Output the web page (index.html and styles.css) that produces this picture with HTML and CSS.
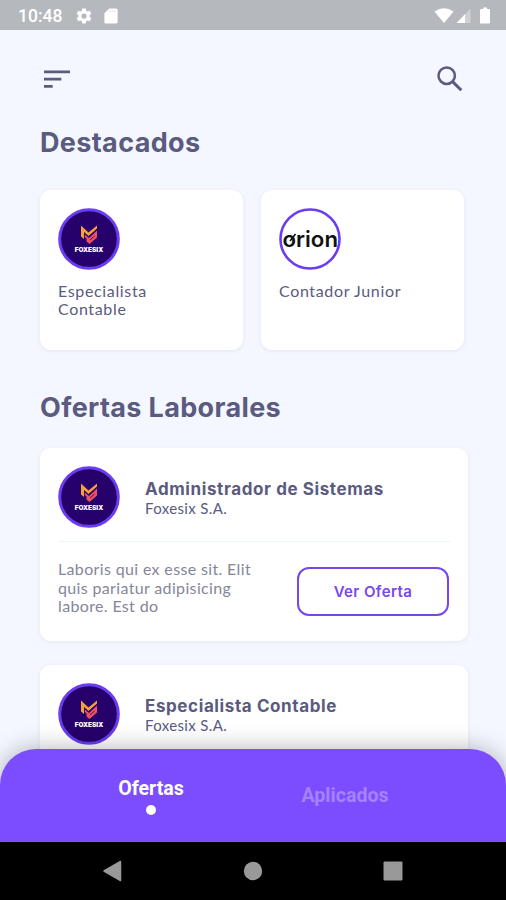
FILE: index.html
```html
<!DOCTYPE html>
<html lang="es">
<head>
<meta charset="utf-8">
<title>Ofertas Laborales</title>
<link rel="stylesheet" href="styles.css">
</head>
<body>
<svg class="defs" width="0" height="0" aria-hidden="true">
  <defs>
    <symbol id="foxesix" viewBox="0 0 62 62">
      <circle cx="31" cy="31" r="29.3" fill="#26006b" stroke="#6a3df0" stroke-width="3"/>
      <path d="M23 17.500L30.500 24.500L39 17.500V20.500L30.500 28L26 24V31L23 28.500Z" fill="#f5a03c"/>
      <path d="M39 22.500V29.500L31.500 36L28.500 33.500V30.500L26.800 29V26.500L31 30Z" fill="#ee4f62"/>
      <path d="M32 32L36.500 28" stroke="#26006b" stroke-width="0.800"/>
      <text x="16.700" y="44" textLength="28.500" lengthAdjust="spacingAndGlyphs" class="logo-small">FOXESIX</text>
    </symbol>
  </defs>
</svg>
<div class="phone">
  <header class="status">
    <span class="clock">10:48</span>
    <svg class="gear" width="18" height="18" viewBox="0 0 24 24" fill="#fff"><path d="M19.43 12.98c.04-.32.07-.64.07-.98s-.03-.66-.07-.98l2.11-1.65c.19-.15.24-.42.12-.64l-2-3.46c-.12-.22-.39-.3-.61-.22l-2.49 1c-.52-.4-1.08-.73-1.69-.98l-.38-2.65A.49.49 0 0 0 14 2h-4c-.25 0-.46.18-.49.42l-.38 2.65c-.61.25-1.17.59-1.69.98l-2.49-1c-.23-.09-.49 0-.61.22l-2 3.46c-.13.22-.07.49.12.64l2.11 1.65c-.04.32-.07.65-.07.98s.03.66.07.98l-2.11 1.65c-.19.15-.24.42-.12.64l2 3.46c.12.22.39.3.61.22l2.49-1c.52.4 1.08.73 1.69.98l.38 2.65c.03.24.24.42.49.42h4c.25 0 .46-.18.49-.42l.38-2.65c.61-.25 1.17-.59 1.69-.98l2.49 1c.23.09.49 0 .61-.22l2-3.46c.12-.22.07-.49-.12-.64l-2.11-1.65zM12 15.5A3.5 3.5 0 1 1 12 8.500a3.500 3.500 0 0 1 0 7z"/></svg>
    <svg class="sdcard" width="14" height="16" viewBox="0 0 14 16"><path d="M5.200 0.500H12a1.600 1.600 0 0 1 1.600 1.600V13.900a1.600 1.600 0 0 1-1.600 1.600H2a1.600 1.600 0 0 1-1.600-1.600V5.300Z" fill="#fff"/><path d="M5.800 2.200v1.700M8.200 2.200v1.700M10.600 2.200v1.700" stroke="#d5d8db" stroke-width="1"/></svg>
    <div class="signals">
      <svg width="20" height="16" viewBox="0 0 20 16"><path d="M0.500 3.600Q10-3.200 19.500 3.600L10 15Z" fill="#fff"/></svg>
      <svg width="15" height="15" viewBox="0 0 15 15"><path d="M0.500 15L14.500 0.500V15Z" fill="#fff" opacity=".35"/><path d="M0.500 15L9 6.300V15Z" fill="#fff"/></svg>
      <svg class="battery" width="10" height="17" viewBox="0 0 10 17"><path d="M3 0.500h4V2h1.800q1.200 0 1.200 1.200V15.400q0 1.200-1.200 1.200H1.200Q0 16.600 0 15.400V3.200Q0 2 1.200 2H3Z" fill="#fff"/></svg>
    </div>
  </header>

  <main class="content">
    <div class="toolbar">
      <svg width="26" height="18" viewBox="0 0 26 18" fill="#5a5b7f"><path d="M0 0.500h26v2.800H0zM0 7.800h17.300v2.800H0zM0 15h8.700v2.800H0z"/></svg>
      <svg width="26" height="26" viewBox="0 0 26 26" fill="none" stroke="#5a5b7f" stroke-width="2.500"><circle cx="9.700" cy="9.700" r="8.200"/><path d="M15.600 15.600L24.300 24.300" stroke-width="3"/></svg>
    </div>

    <h2 class="title featured-title">Destacados</h2>
    <div class="featured">
      <article class="card mini">
        <svg class="avatar" viewBox="0 0 62 62"><use href="#foxesix"/></svg>
        <p class="mini-name">Especialista<br>Contable</p>
      </article>
      <article class="card mini">
        <svg class="avatar" viewBox="0 0 62 62"><circle cx="31" cy="31" r="29.500" fill="#fff" stroke="#6a3df0" stroke-width="2.600"/><text x="3.500" y="38.500" textLength="55.500" lengthAdjust="spacingAndGlyphs" class="logo-orion">orion</text><path d="M11 33L16.500 26" stroke="#111" stroke-width="1.600"/></svg>
        <p class="mini-name">Contador Junior</p>
      </article>
    </div>

    <h2 class="title offers-title">Ofertas Laborales</h2>
    <article class="card offer">
      <div class="offer-head">
        <svg class="avatar" viewBox="0 0 62 62"><use href="#foxesix"/></svg>
        <div>
          <h3 class="job">Administrador de Sistemas</h3>
          <p class="company">Foxesix S.A.</p>
        </div>
      </div>
      <div class="offer-body">
        <p class="desc">Laboris qui ex esse sit. Elit<br>quis pariatur adipisicing<br>labore. Est do</p>
        <button class="view">Ver Oferta</button>
      </div>
    </article>
    <article class="card offer">
      <div class="offer-head">
        <svg class="avatar" viewBox="0 0 62 62"><use href="#foxesix"/></svg>
        <div>
          <h3 class="job">Especialista Contable</h3>
          <p class="company">Foxesix S.A.</p>
        </div>
      </div>
    </article>
  </main>

  <nav class="tabs">
    <div class="tab active"><span>Ofertas</span><i class="dot"></i></div>
    <div class="tab"><span>Aplicados</span></div>
  </nav>
  <footer class="system">
    <svg width="20" height="22" viewBox="0 0 20 22"><path d="M2 11L18.500 1.500V20.500Z" fill="#999" stroke="#999" stroke-width="1.500" stroke-linejoin="round"/></svg>
    <svg width="20" height="20" viewBox="0 0 20 20"><circle cx="10" cy="10" r="9.200" fill="#999"/></svg>
    <svg width="20" height="20" viewBox="0 0 20 20"><rect x="0.500" y="0.500" width="19" height="19" rx="1" fill="#999"/></svg>
  </footer>
</div>
</body>
</html>
```
FILE: styles.css
```css
* { box-sizing: border-box; }
body { margin: 0; }
h2, h3, p { margin: 0; }
svg { display: block; flex: none; }
.defs { position: absolute; }

.phone {
  width: 506px;
  height: 900px;
  display: flex;
  flex-direction: column;
  overflow: hidden;
  background: #f4f7ff;
  color: #5a5b7f;
  font-family: Lato, "Noto Sans", sans-serif;
}

.status {
  height: 30px;
  flex: none;
  display: flex;
  align-items: center;
  padding: 1px 16px 0 18px;
  background: #b5b9be;
  color: #fff;
}
.clock { width: 57px; font: 500 17.5px/20px Roboto, sans-serif; }
.sdcard { margin-left: 11px; }
.signals { margin-left: auto; display: flex; align-items: center; gap: 2px; }
.battery { margin-left: 7px; }

.content { flex: 1; min-height: 0; overflow: hidden; padding: 0 38px 0 40px; }
.toolbar {
  display: flex;
  justify-content: space-between;
  align-items: center;
  height: 26px;
  margin: 36px 5px 0 4px;
}
.title { font: 700 27px/36px Inter, sans-serif; letter-spacing: 0.35px; white-space: nowrap; }
.featured-title { margin-top: 33px; }
.offers-title { margin-top: 40px; }

.card {
  background: #fff;
  border-radius: 11px;
  box-shadow: 0 1px 4px rgba(90, 91, 150, 0.1);
}
.featured { display: grid; grid-template-columns: 203px 203px; gap: 18px; margin-top: 29px; }
.mini { height: 160px; padding: 18px; }
.avatar { width: 62px; height: 62px; }
.mini-name { margin-top: 12px; font-size: 16px; line-height: 18px; letter-spacing: 0.65px; white-space: nowrap; }
.logo-small { font: 900 6.3px Inter, sans-serif; fill: #fff; }
.logo-orion { font: 600 22px Inter, sans-serif; fill: #111; }

.offer { height: 193px; padding: 0 18px; margin-top: 22px; }
.offer + .offer { margin-top: 24px; }
.offer-head { display: flex; align-items: center; gap: 25px; height: 94px; padding-top: 5px; border-bottom: 1px solid #e9f7fb; white-space: nowrap; }
.job { padding-top: 1px; font: 700 17px/20px Inter, sans-serif; letter-spacing: 0.6px; }
.company { font-size: 15px; line-height: 18px; letter-spacing: 0.35px; }
.offer-body { display: flex; justify-content: space-between; align-items: flex-start; padding-top: 18px; }
.desc { font-size: 16px; line-height: 18.5px; letter-spacing: 0.35px; color: #85869b; white-space: nowrap; }
.view {
  width: 152px;
  height: 49px;
  margin: 7px 1px 0 0;
  padding: 0;
  border: 2px solid #7847e8;
  border-radius: 12px;
  background: #fff;
  color: #7847f0;
  font: 600 15px/20px Inter, sans-serif;
  letter-spacing: 0.4px;
}

.tabs {
  position: relative;
  flex: none;
  height: 93px;
  margin-top: -93px;
  padding: 0 64px 0 54px;
  display: grid;
  grid-template-columns: 1fr 1fr;
  background: #7c4dff;
  border-radius: 36px 36px 0 0;
  box-shadow: 0 0 24px rgba(0, 0, 0, 0.3);
  color: #fff;
  font: 700 19.6px/24px Roboto, sans-serif;
}
.tab { display: flex; flex-direction: column; align-items: center; justify-content: center; color: #a582ff; }
.tab.active { color: #fff; }
.dot { width: 10px; height: 10px; margin-top: 4px; border-radius: 50%; background: #fff; }

.system {
  position: relative;
  flex: none;
  height: 58px;
  display: flex;
  align-items: center;
  justify-content: space-between;
  padding: 0 103px 0 102px;
  background: #000;
}
```
